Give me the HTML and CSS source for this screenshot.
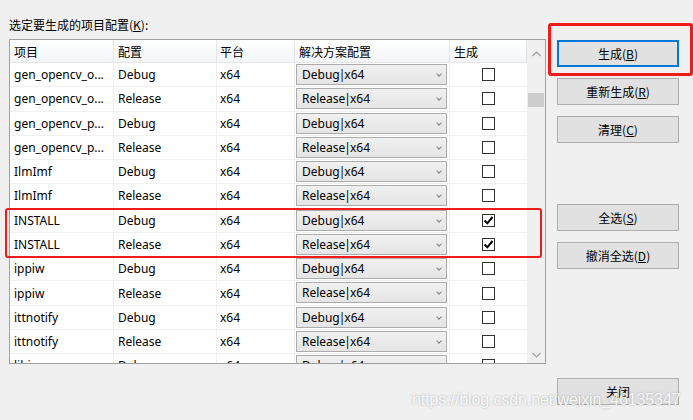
FILE: index.html
```html
<!DOCTYPE html>
<html lang="zh">
<head>
<meta charset="utf-8">
<link rel="stylesheet" href="styles.css">
</head>
<body>
<div class="dialog">
  <div class="left">
    <div class="label">选定要生成的项目配置(<u>K</u>):</div>
    <div class="listbox">
      <div class="table">
        <div class="row head">
          <div class="cell">项目</div>
          <div class="cell">配置</div>
          <div class="cell">平台</div>
          <div class="cell">解决方案配置</div>
          <div class="cell">生成</div>
        </div>
        <div class="row"><div class="cell">gen_opencv_o...</div><div class="cell">Debug</div><div class="cell">x64</div><div class="cell"><div class="combo">Debug<span class="pipe">|</span>x64<span class="arrow"></span></div></div><div class="cell chk"><span class="box"></span></div></div>
        <div class="row"><div class="cell">gen_opencv_o...</div><div class="cell">Release</div><div class="cell">x64</div><div class="cell"><div class="combo">Release<span class="pipe">|</span>x64<span class="arrow"></span></div></div><div class="cell chk"><span class="box"></span></div></div>
        <div class="row"><div class="cell">gen_opencv_p...</div><div class="cell">Debug</div><div class="cell">x64</div><div class="cell"><div class="combo">Debug<span class="pipe">|</span>x64<span class="arrow"></span></div></div><div class="cell chk"><span class="box"></span></div></div>
        <div class="row"><div class="cell">gen_opencv_p...</div><div class="cell">Release</div><div class="cell">x64</div><div class="cell"><div class="combo">Release<span class="pipe">|</span>x64<span class="arrow"></span></div></div><div class="cell chk"><span class="box"></span></div></div>
        <div class="row"><div class="cell">IlmImf</div><div class="cell">Debug</div><div class="cell">x64</div><div class="cell"><div class="combo">Debug<span class="pipe">|</span>x64<span class="arrow"></span></div></div><div class="cell chk"><span class="box"></span></div></div>
        <div class="row"><div class="cell">IlmImf</div><div class="cell">Release</div><div class="cell">x64</div><div class="cell"><div class="combo">Release<span class="pipe">|</span>x64<span class="arrow"></span></div></div><div class="cell chk"><span class="box"></span></div></div>
        <div class="row"><div class="cell">INSTALL</div><div class="cell">Debug</div><div class="cell">x64</div><div class="cell"><div class="combo">Debug<span class="pipe">|</span>x64<span class="arrow"></span></div></div><div class="cell chk"><span class="box checked"><svg width="11" height="11" viewBox="0 0 11 11"><path d="M1.5 5.5 L4.3 8.3 L9.5 2" fill="none" stroke="#000" stroke-width="2"/></svg></span></div></div>
        <div class="row"><div class="cell">INSTALL</div><div class="cell">Release</div><div class="cell">x64</div><div class="cell"><div class="combo">Release<span class="pipe">|</span>x64<span class="arrow"></span></div></div><div class="cell chk"><span class="box checked"><svg width="11" height="11" viewBox="0 0 11 11"><path d="M1.5 5.5 L4.3 8.3 L9.5 2" fill="none" stroke="#000" stroke-width="2"/></svg></span></div></div>
        <div class="row"><div class="cell">ippiw</div><div class="cell">Debug</div><div class="cell">x64</div><div class="cell"><div class="combo">Debug<span class="pipe">|</span>x64<span class="arrow"></span></div></div><div class="cell chk"><span class="box"></span></div></div>
        <div class="row"><div class="cell">ippiw</div><div class="cell">Release</div><div class="cell">x64</div><div class="cell"><div class="combo">Release<span class="pipe">|</span>x64<span class="arrow"></span></div></div><div class="cell chk"><span class="box"></span></div></div>
        <div class="row"><div class="cell">ittnotify</div><div class="cell">Debug</div><div class="cell">x64</div><div class="cell"><div class="combo">Debug<span class="pipe">|</span>x64<span class="arrow"></span></div></div><div class="cell chk"><span class="box"></span></div></div>
        <div class="row"><div class="cell">ittnotify</div><div class="cell">Release</div><div class="cell">x64</div><div class="cell"><div class="combo">Release<span class="pipe">|</span>x64<span class="arrow"></span></div></div><div class="cell chk"><span class="box"></span></div></div>
        <div class="row"><div class="cell">libjasper</div><div class="cell">Debug</div><div class="cell">x64</div><div class="cell"><div class="combo">Debug<span class="pipe">|</span>x64<span class="arrow"></span></div></div><div class="cell chk"><span class="box"></span></div></div>
      </div>
      <div class="scrollbar">
        <div class="sb-btn"><svg width="9" height="6" viewBox="0 0 9 6"><path d="M0.5 5 L4.5 1 L8.5 5" fill="none" stroke="#a0a0a0" stroke-width="1.2"/></svg></div>
        <div class="thumb"></div>
        <div class="sb-space"></div>
        <div class="sb-btn"><svg width="9" height="6" viewBox="0 0 9 6"><path d="M0.5 1 L4.5 5 L8.5 1" fill="none" stroke="#a0a0a0" stroke-width="1.2"/></svg></div>
      </div>
    </div>
  </div>
  <div class="buttons">
    <div class="btn default">生成(<u>B</u>)</div>
    <div class="btn">重新生成(<u>R</u>)</div>
    <div class="btn">清理(<u>C</u>)</div>
    <div class="btn sel">全选(<u>S</u>)</div>
    <div class="btn">撤消全选(<u>D</u>)</div>
    <div class="btn close">关闭</div>
  </div>
</div>
<div class="mark mark-build"></div>
<div class="mark mark-install"></div>
<div class="watermark">https://blog.csdn.net/weixin_46135347</div>
</body>
</html>
```
FILE: styles.css
```css
html, body {
  margin: 0;
  padding: 0;
  background: #f0f0f0;
  width: 693px;
  height: 420px;
  overflow: hidden;
  font-family: "Noto Sans", "Noto Sans CJK SC", sans-serif;
  font-size: 12px;
  color: #000;
}
.dialog {
  display: flex;
  padding: 17px 0 0 9px;
}
.left {
  width: 537px;
}
.label {
  height: 16px;
  line-height: 16px;
  margin-bottom: 6px;
  font-family: "Noto Sans CJK SC", sans-serif;
}
u { text-decoration: underline; text-underline-offset: 1px; }
.listbox {
  box-sizing: border-box;
  width: 537px;
  height: 325px;
  border: 1px solid #a0a0a0;
  background: #fff;
  display: flex;
  overflow: hidden;
}
.table {
  width: 517px;
  overflow: hidden;
}
.row {
  display: grid;
  grid-template-columns: 104px 103px 78px 155px 77px;
  box-sizing: border-box;
  height: 24.28px;
  border-bottom: 1px solid #f0f0f0;
  align-items: stretch;
}
.row.head {
  height: 23px;
  border-bottom: 1px solid #e5e5e5;
  background: linear-gradient(#ffffff, #f4f5f7);
  font-family: "Noto Sans CJK SC", sans-serif;
}
.cell {
  box-sizing: border-box;
  border-right: 1px solid #f0f0f0;
  padding-left: 4px;
  display: flex;
  align-items: center;
  white-space: nowrap;
  overflow: hidden;
}
.row.head .cell { border-right-color: #e5e5e5; padding-top: 1px; }
.row .cell:nth-child(3) { padding-left: 3px; }
.row .cell:nth-child(4) { padding-left: 1px; align-items: flex-start; padding-top: 1px; }
.row.head .cell:nth-child(4) { padding-left: 4px; align-items: center; }
.combo {
  position: relative;
  box-sizing: border-box;
  width: 151px;
  height: 21px;
  border: 1px solid #acacac;
  background: linear-gradient(#f0f0f0, #e5e5e5);
  padding-left: 5px;
  display: flex;
  align-items: center;
}
.pipe { margin: 0 -1px; }
.arrow {
  position: absolute;
  right: 5px;
  top: 7px;
  width: 3px;
  height: 3px;
  border-right: 1px solid #808080;
  border-bottom: 1px solid #808080;
  transform: rotate(45deg);
}
.cell.chk {
  justify-content: center;
  padding-left: 0;
  border-right: none;
}
.box {
  box-sizing: border-box;
  width: 13px;
  height: 13px;
  border: 1px solid #333;
  background: #fff;
  display: flex;
  align-items: center;
  justify-content: center;
}
.scrollbar {
  width: 18px;
  background: #f0f0f0;
  display: flex;
  flex-direction: column;
}
.sb-btn {
  height: 17px;
  display: flex;
  align-items: center;
  justify-content: center;
}
.scrollbar .sb-btn:first-child { margin-top: 5px; }
.thumb {
  margin: 31px 1px 0 1px;
  height: 14px;
  background: #cdcdcd;
}
.sb-space { flex: 1; }
.buttons {
  display: flex;
  flex-direction: column;
  margin-left: 11px;
  padding-top: 23px;
  font-family: "Noto Sans CJK SC", sans-serif;
}
.btn {
  box-sizing: border-box;
  width: 122px;
  height: 27px;
  border: 1px solid #adadad;
  background: #e1e1e1;
  display: flex;
  align-items: center;
  justify-content: center;
  margin-bottom: 11px;
}
.btn.default {
  border: 2px solid #0078d7;
}
.btn.sel { margin-top: 50px; }
.btn.close { margin-top: 98px; }
.mark {
  position: absolute;
  box-sizing: border-box;
  border: 3px solid #f21b1b;
  border-radius: 3px;
}
.mark-build {
  left: 548px;
  top: 23px;
  width: 145px;
  height: 53px;
}
.mark-install {
  left: 5px;
  top: 208px;
  width: 537px;
  height: 50px;
  border-width: 2px;
}
.watermark {
  position: absolute;
  left: 412px;
  top: 391px;
  font-family: "Liberation Sans", sans-serif;
  font-size: 16px;
  letter-spacing: -0.1px;
  color: rgba(255,255,255,0.9);
  text-shadow: 0 0 2px rgba(110,110,110,0.55);
  white-space: nowrap;
}
```
